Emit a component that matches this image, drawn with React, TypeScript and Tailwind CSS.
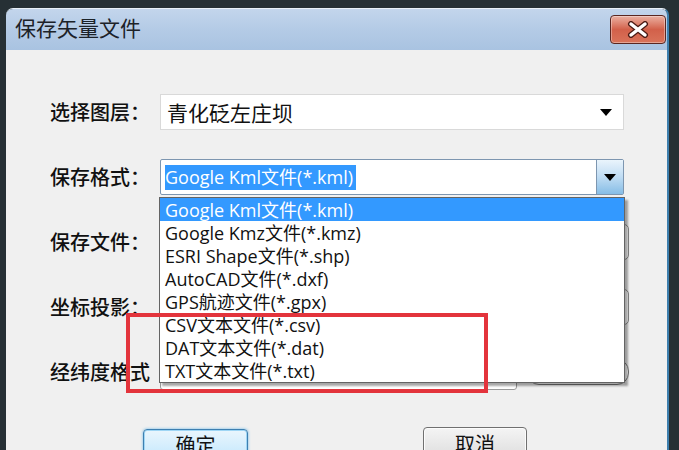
import React from "react";

const cjk = { fontFamily: '"Noto Sans CJK SC", "Noto Sans", sans-serif' };
const mixed = { fontFamily: '"Open Sans", "Noto Sans CJK SC", sans-serif' };

const items = [
  "Google Kml文件(*.kml)",
  "Google Kmz文件(*.kmz)",
  "ESRI Shape文件(*.shp)",
  "AutoCAD文件(*.dxf)",
  "GPS航迹文件(*.gpx)",
  "CSV文本文件(*.csv)",
  "DAT文本文件(*.dat)",
  "TXT文本文件(*.txt)",
];

function Tri() {
  return (
    <svg width="12" height="7" viewBox="0 0 12 7">
      <path d="M0 0 L12 0 L6 7 Z" fill="#000" />
    </svg>
  );
}

function Label({ children }: { children: React.ReactNode }) {
  return (
    <div className="w-[110px] shrink-0 text-[20px] font-medium text-[#111] leading-none whitespace-nowrap" style={cjk}>
      {children}
    </div>
  );
}

export default function App() {
  return (
    <div className="relative w-[679px] h-[450px] overflow-hidden bg-[#263035] pt-[8px] pl-[6px] pr-[10px]">
      <div className="relative h-full flex flex-col rounded-t-[7px] overflow-hidden border-r-2 border-r-[#3d7fae] border-t border-t-[#e8f0f8]">
        {/* title bar */}
        <div className="h-[41px] shrink-0 flex items-start justify-between pl-[9px] pr-[1px] bg-gradient-to-b from-[#c3d5ec] via-[#b4cbe6] to-[#a9c3e1]">
          <span className="mt-[8px] text-[21px] leading-none text-[#1c2228]" style={cjk}>
            保存矢量文件
          </span>
          <div className="mt-[6px] w-[56px] h-[29px] rounded-[4px] border border-[#5a2620] flex items-center justify-center bg-gradient-to-b from-[#eab0a2] via-[#d2604a] to-[#d9735a] shadow-[inset_0_0_0_1px_rgba(255,255,255,0.35)]">
            <svg width="24" height="17" viewBox="0 0 24 17">
              <path d="M5 3 L19 14 M19 3 L5 14" stroke="#4b1b14" strokeWidth="6" strokeLinecap="round" />
              <path d="M5 3 L19 14 M19 3 L5 14" stroke="#fff" strokeWidth="3.4" strokeLinecap="round" />
            </svg>
          </div>
        </div>

        {/* body */}
        <div className="relative flex-1 bg-[#f0f0f0] pt-[44px] pl-[44px] pr-[43px] flex flex-col">
          <div className="flex flex-col gap-[29px]">
            {/* row 1 */}
            <div className="flex items-center h-[36px]">
              <Label>选择图层：</Label>
              <div className="flex-1 h-full bg-white border border-[#d9d9d9] flex items-center justify-between pl-[6px] pr-[11px]">
                <span className="text-[21px] leading-none text-[#111]" style={cjk}>
                  青化砭左庄坝
                </span>
                <Tri />
              </div>
            </div>

            {/* row 2 */}
            <div className="flex items-center h-[36px]">
              <Label>保存格式：</Label>
              <div className="relative flex-1 h-full">
                <div className="h-full bg-white border border-[#7d96b0] rounded-[2px] flex items-center">
                  <div className="flex-1 pl-[4px]">
                    <span className="inline-block bg-[#3399ff] text-white text-[18px] leading-[25px] pr-[3px]" style={mixed}>
                      Google Kml文件(*.kml)
                    </span>
                  </div>
                  <div className="w-[27px] h-full border-l border-[#7d96b0] bg-gradient-to-b from-[#eaf4fc] via-[#bfdcf3] to-[#86bde6] flex items-center justify-center">
                    <Tri />
                  </div>
                </div>
                {/* dropdown list */}
                <div className="absolute z-20 left-[-1px] top-[calc(100%+2px)] w-[466px] bg-white border border-[#646464] shadow-[3px_3px_2px_rgba(0,0,0,0.35)]">
                  {items.map((t, i) => (
                    <div
                      key={t}
                      className={
                        "h-[23px] pl-[5px] flex items-center text-[18px] leading-none whitespace-nowrap " +
                        (i === 0 ? "bg-[#3399ff] text-white" : "text-[#111]")
                      }
                      style={mixed}
                    >
                      {t}
                    </div>
                  ))}
                </div>
              </div>
            </div>

            {/* row 3 */}
            <div className="flex items-center h-[36px]">
              <Label>保存文件：</Label>
              <div className="flex-1 h-full mr-[-5px] bg-white border border-[#8a8a8a] rounded-[5px]" />
            </div>

            {/* row 4 */}
            <div className="flex items-center h-[36px]">
              <Label>坐标投影：</Label>
              <div className="flex-1 h-full mr-[-5px] bg-white border border-[#8a8a8a] rounded-[5px]" />
            </div>

            {/* row 5 */}
            <div className="flex items-center h-[36px]">
              <Label>经纬度格式</Label>
              <div className="w-[357px] h-full bg-white border border-[#9a9a9a] rounded-[3px]" />
              <div className="flex-1 h-[26px] ml-[10px] mr-[-5px] bg-white border border-[#777] rounded-[12px]" />
            </div>
          </div>

          {/* buttons */}
          <div className="flex mt-[39px] pl-[93px] gap-[175px]">
            <div className="w-[105px] h-[34px] rounded-[4px] border border-[#3c7fb1] bg-gradient-to-b from-[#eaf6fd] to-[#bee6fd] shadow-[0_0_3px_#6ab8e8,inset_0_0_0_1px_#9fd6f5] flex justify-center pt-[5px]">
              <span className="text-[20px] leading-none text-[#111]" style={cjk}>确定</span>
            </div>
            <div className="w-[104px] h-[34px] -mt-[2px] rounded-[4px] border border-[#707070] bg-gradient-to-b from-[#f4f4f4] to-[#dcdcdc] shadow-[inset_0_0_0_1px_#fcfcfc] flex justify-center pt-[6px]">
              <span className="text-[20px] leading-none text-[#111]" style={cjk}>取消</span>
            </div>
          </div>
        </div>
      </div>

      {/* red annotation box */}
      <div className="absolute z-30 left-[126px] top-[313px] w-[362px] h-[80px] border-[4px] border-[#e3343c]" />
    </div>
  );
}
